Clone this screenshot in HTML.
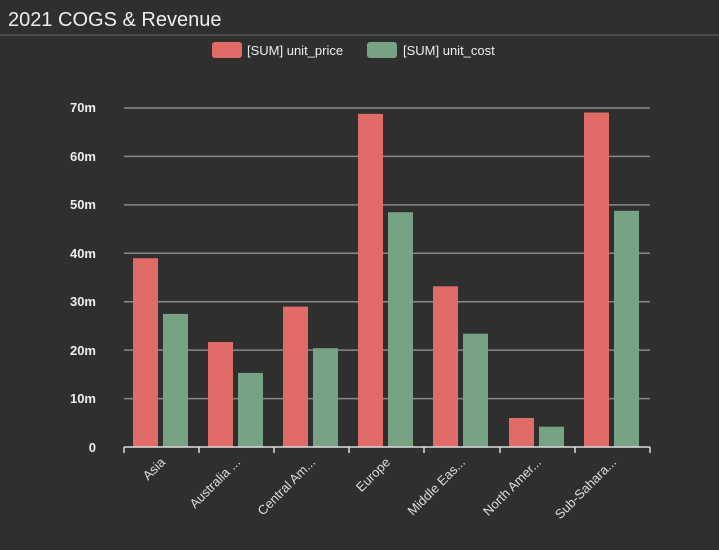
<!DOCTYPE html><html><head><style>body{margin:0;background:#2f2f2f;width:719px;height:545px;overflow:hidden;font-family:"Liberation Sans",sans-serif}</style></head><body>
<svg width="719" height="545" xmlns="http://www.w3.org/2000/svg" font-family="Liberation Sans, sans-serif">
<rect width="719" height="545" fill="#2f2f2f"/>
<text x="8" y="26" font-size="20" fill="#eee">2021 COGS &amp; Revenue</text>
<line x1="0" y1="35" x2="719" y2="35" stroke="#555" stroke-width="1.5"/>
<rect x="212" y="42" width="30" height="16" rx="3" fill="#e06b67"/>
<text x="247" y="55" font-size="13" fill="#eee">[SUM] unit_price</text>
<rect x="367" y="42" width="30" height="16" rx="3" fill="#76a383"/>
<text x="403" y="55" font-size="13" fill="#eee">[SUM] unit_cost</text>
<g font-size="13" fill="#eee" text-anchor="end" font-weight="bold">
<text x="96" y="112">70m</text><text x="96" y="161">60m</text><text x="96" y="209">50m</text><text x="96" y="258">40m</text><text x="96" y="306">30m</text><text x="96" y="355">20m</text><text x="96" y="403">10m</text><text x="96" y="452">0</text>
</g>
<g stroke="#888" stroke-width="1.5">
<line x1="124" y1="108" x2="650" y2="108"/><line x1="124" y1="156.4" x2="650" y2="156.4"/><line x1="124" y1="204.9" x2="650" y2="204.9"/><line x1="124" y1="253.3" x2="650" y2="253.3"/><line x1="124" y1="301.7" x2="650" y2="301.7"/><line x1="124" y1="350.1" x2="650" y2="350.1"/><line x1="124" y1="398.6" x2="650" y2="398.6"/>
</g>
<g fill="#e06b67">
<rect x="133" y="258.2" width="25" height="188.8"/>
<rect x="208" y="342" width="25" height="105"/>
<rect x="283" y="306.6" width="25" height="140.4"/>
<rect x="358" y="113.9" width="25" height="333.1"/>
<rect x="433" y="286.3" width="25" height="160.7"/>
<rect x="509" y="418" width="25" height="29"/>
<rect x="584" y="112.5" width="25" height="334.5"/>
</g>
<g fill="#76a383">
<rect x="163" y="313.9" width="25" height="133.1"/>
<rect x="238" y="372.9" width="25" height="74.1"/>
<rect x="313" y="348.2" width="25" height="98.8"/>
<rect x="388" y="212.2" width="25" height="234.8"/>
<rect x="463" y="333.7" width="25" height="113.3"/>
<rect x="539" y="426.7" width="25" height="20.3"/>
<rect x="614" y="210.8" width="25" height="236.2"/>
</g>
<g stroke="#ddd" stroke-width="1.5">
<line x1="124" y1="447" x2="650" y2="447"/>
<line x1="124" y1="447" x2="124" y2="453"/><line x1="199" y1="447" x2="199" y2="453"/><line x1="274" y1="447" x2="274" y2="453"/><line x1="349" y1="447" x2="349" y2="453"/><line x1="424" y1="447" x2="424" y2="453"/><line x1="500" y1="447" x2="500" y2="453"/><line x1="575" y1="447" x2="575" y2="453"/><line x1="650" y1="447" x2="650" y2="453"/>
</g>
<g font-size="13" fill="#ddd" text-anchor="end">
<text transform="translate(166,463) rotate(-45)">Asia</text>
<text transform="translate(241,463) rotate(-45)">Australia ...</text>
<text transform="translate(316,463) rotate(-45)">Central Am...</text>
<text transform="translate(391,463) rotate(-45)">Europe</text>
<text transform="translate(466,463) rotate(-45)">Middle Eas...</text>
<text transform="translate(542,463) rotate(-45)">North Amer...</text>
<text transform="translate(617,463) rotate(-45)">Sub-Sahara...</text>
</g>
</svg></body></html>
